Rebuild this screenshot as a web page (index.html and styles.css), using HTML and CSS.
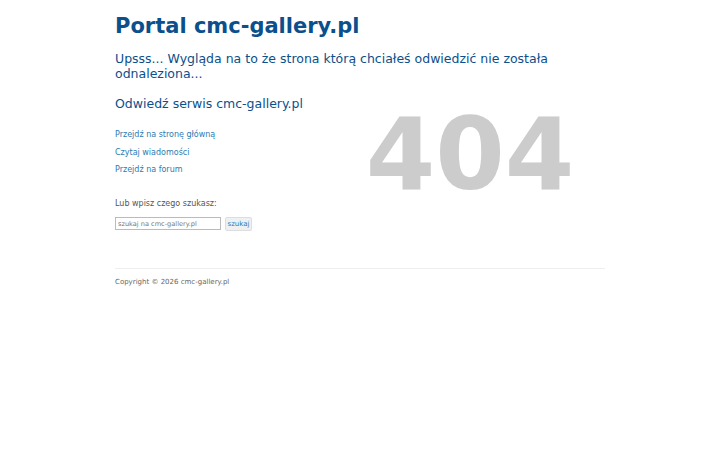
FILE: index.html
```html
<!DOCTYPE html>
<html lang="pl">
<head>
<meta charset="utf-8">
<title>Portal cmc-gallery.pl</title>
<link rel="stylesheet" href="styles.css">
</head>
<body>
<div class="wrap">
  <h1 class="title">Portal cmc-gallery.pl</h1>
  <p class="lead">Upsss... Wygląda na to że strona którą chciałeś odwiedzić nie została odnaleziona...</p>
  <div class="main">
    <div class="left">
      <h2 class="visit">Odwiedź serwis cmc-gallery.pl</h2>
      <ul class="links">
        <li><a href="#">Przejdź na stronę główną</a></li>
        <li><a href="#">Czytaj wiadomości</a></li>
        <li><a href="#">Przejdź na forum</a></li>
      </ul>
      <p class="search-label">Lub wpisz czego szukasz:</p>
      <form class="search">
        <input type="text" class="search-input" placeholder="szukaj na cmc-gallery.pl">
        <button type="button" class="search-btn">szukaj</button>
      </form>
    </div>
    <div class="code">404</div>
  </div>
  <footer class="footer">Copyright © 2026 cmc-gallery.pl</footer>
</div>
</body>
</html>
```
FILE: styles.css
```css
html, body {
  margin: 0;
  padding: 0;
  background: #fff;
}
body {
  font-family: "DejaVu Sans", sans-serif;
  color: #333;
}
.wrap {
  width: 490px;
  margin: 0 auto;
  padding-top: 12px;
}
.title {
  margin: 0;
  font-size: 21px;
  line-height: 28px;
  font-weight: bold;
  color: #0b4f8c;
}
.lead {
  margin: 11px 0 0;
  font-size: 12.5px;
  line-height: 15px;
  color: #0b4f8c;
}
.main {
  display: flex;
  align-items: flex-start;
}
.left {
  width: 220px;
}
.visit {
  margin: 14px 0 0;
  font-size: 12.5px;
  line-height: 18px;
  font-weight: normal;
  color: #0b4f8c;
}
.links {
  list-style: none;
  margin: 13px 0 0;
  padding: 0;
}
.links li {
  font-size: 8px;
  line-height: 17.5px;
}
.links a {
  color: #2b7bb2;
  text-decoration: none;
}
.search-label {
  margin: 19px 0 0;
  font-size: 8px;
  line-height: 12px;
  color: #555;
}
.search {
  display: flex;
  align-items: center;
  gap: 4px;
  margin-top: 7px;
}
.search-input {
  box-sizing: border-box;
  width: 106px;
  height: 13px;
  padding: 0 2px;
  border: 1px solid #bbb;
  font-family: "DejaVu Sans", sans-serif;
  font-size: 6.6px;
  color: #555;
}
.search-input::placeholder {
  color: #777;
}
.search-btn {
  box-sizing: border-box;
  width: 27px;
  height: 14px;
  padding: 0;
  border: 1px solid #ddd;
  border-radius: 2px;
  background: #eef1f4;
  font-family: "DejaVu Sans", sans-serif;
  font-size: 7px;
  color: #2b7bb2;
}
.code {
  flex: 1;
  margin-top: 24px;
  text-align: center;
  font-family: "DejaVu Sans", sans-serif;
  font-weight: bold;
  font-size: 100px;
  line-height: 100px;
  color: #cccccc;
}
.footer {
  margin-top: 37px;
  padding-top: 8px;
  border-top: 1px solid #eee;
  font-size: 7px;
  line-height: 10px;
  color: #666;
}
```
